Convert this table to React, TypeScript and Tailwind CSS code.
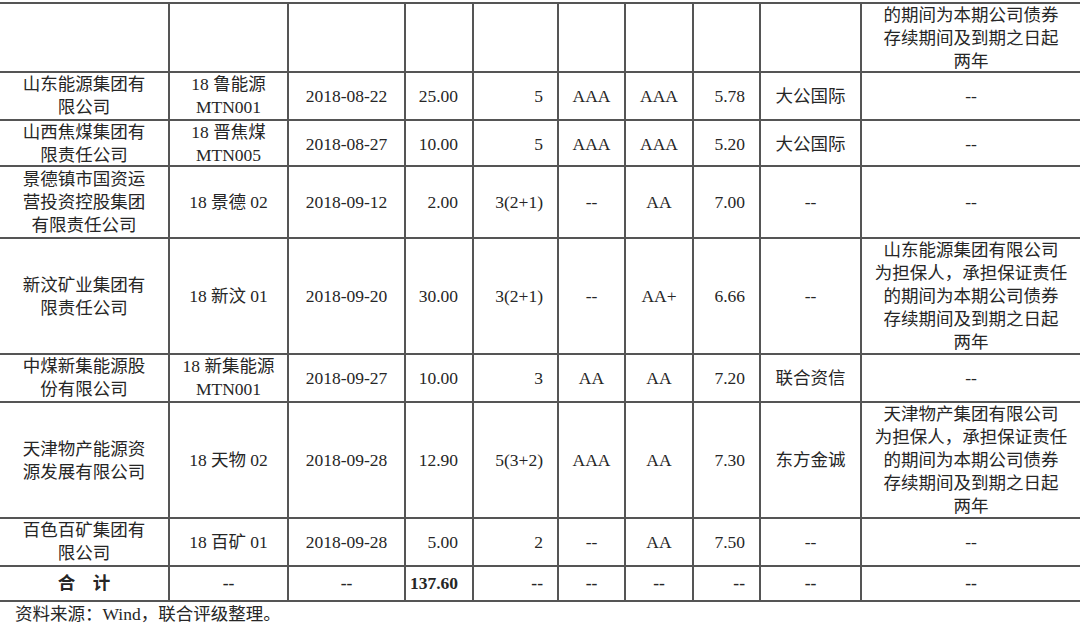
import React from "react";

type Cell = string | string[];

const alignR = [3, 4, 7]; // amount, term, rate columns are right aligned

const rows: { h: string; cells: Cell[]; bold?: boolean }[] = [
  {
    h: "h-[69px]",
    cells: ["", "", "", "", "", "", "", "", "", ["的期间为本期公司债券", "存续期间及到期之日起", "两年"]],
  },
  {
    h: "h-[48px]",
    cells: [["山东能源集团有", "限公司"], ["18 鲁能源", "MTN001"], "2018-08-22", "25.00", "5", "AAA", "AAA", "5.78", "大公国际", "--"],
  },
  {
    h: "h-[46px]",
    cells: [["山西焦煤集团有", "限责任公司"], ["18 晋焦煤", "MTN005"], "2018-08-27", "10.00", "5", "AAA", "AAA", "5.20", "大公国际", "--"],
  },
  {
    h: "h-[72px]",
    cells: [["景德镇市国资运", "营投资控股集团", "有限责任公司"], "18 景德 02", "2018-09-12", "2.00", "3(2+1)", "--", "AA", "7.00", "--", "--"],
  },
  {
    h: "h-[116px]",
    cells: [
      ["新汶矿业集团有", "限责任公司"],
      "18 新汶 01",
      "2018-09-20",
      "30.00",
      "3(2+1)",
      "--",
      "AA+",
      "6.66",
      "--",
      ["山东能源集团有限公司", "为担保人，承担保证责任", "的期间为本期公司债券", "存续期间及到期之日起", "两年"],
    ],
  },
  {
    h: "h-[48px]",
    cells: [["中煤新集能源股", "份有限公司"], ["18 新集能源", "MTN001"], "2018-09-27", "10.00", "3", "AA", "AA", "7.20", "联合资信", "--"],
  },
  {
    h: "h-[116px]",
    cells: [
      ["天津物产能源资", "源发展有限公司"],
      "18 天物 02",
      "2018-09-28",
      "12.90",
      "5(3+2)",
      "AAA",
      "AA",
      "7.30",
      "东方金诚",
      ["天津物产集团有限公司", "为担保人，承担保证责任", "的期间为本期公司债券", "存续期间及到期之日起", "两年"],
    ],
  },
  {
    h: "h-[48px]",
    cells: [["百色百矿集团有", "限公司"], "18 百矿 01", "2018-09-28", "5.00", "2", "--", "AA", "7.50", "--", "--"],
  },
  {
    h: "h-[35px]",
    bold: true,
    cells: ["合\u3000计", "--", "--", "137.60", "--", "--", "--", "--", "--", "--"],
  },
];

function Row({ h, cells, bold }: { h: string; cells: Cell[]; bold?: boolean }) {
  return (
    <div
      className={`grid grid-cols-[168px_119px_117px_68px_85px_67px_68px_67px_101px_220px] border-b-2 border-[#555] ${h} ${
        bold ? "font-bold" : ""
      }`}
    >
      {cells.map((c, i) => {
        const lines = Array.isArray(c) ? c : [c];
        const right = alignR.includes(i);
        return (
          <div
            key={i}
            className={`flex flex-col justify-center overflow-visible ${
              i > 0 ? "border-l-2 border-[#555]" : ""
            } ${right ? "items-end pr-[14px]" : "items-center"}`}
          >
            {lines.map((l, j) => (
              <span key={j} className="whitespace-pre leading-[23px]">
                {l}
              </span>
            ))}
          </div>
        );
      })}
    </div>
  );
}

export default function App() {
  return (
    <div
      className="w-[1080px] h-[627px] overflow-hidden bg-white pt-[2px] text-[17.5px] text-[#262626]"
      style={{ fontFamily: "'Liberation Serif', 'Noto Sans CJK SC', serif" }}
    >
      <div className="border-t-2 border-[#555]">
        {rows.map((r, i) => (
          <Row key={i} h={r.h} cells={r.cells} bold={r.bold} />
        ))}
      </div>
      <div className="pl-[15px] leading-[25px]">资料来源：Wind，联合评级整理。</div>
    </div>
  );
}
